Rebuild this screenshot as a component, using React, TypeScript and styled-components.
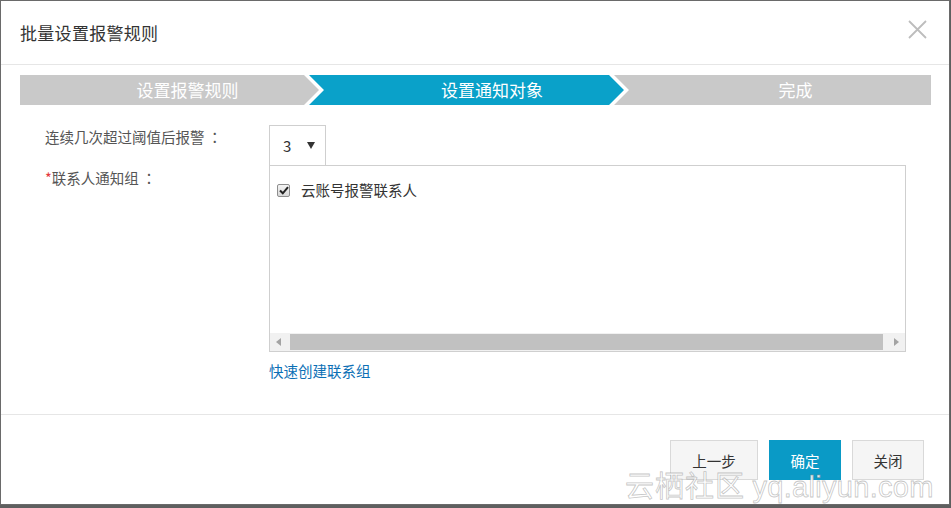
import React from "react";
import styled, { createGlobalStyle, css } from "styled-components";

const Global = createGlobalStyle`
  html, body { margin: 0; padding: 0; }
  body {
    background: #5f5f5f;
    font-family: "Noto Sans CJK SC", "Microsoft YaHei", "Liberation Sans", sans-serif;
    font-size: 14.5px;
    color: #333;
    width: 951px;
    height: 508px;
    overflow: hidden;
  }
  * { box-sizing: border-box; }
`;

const Dialog = styled.div`
  position: relative;
  width: 950px;
  height: 505px;
  background: #fff;
  border: 1px solid #6a6a6a;
  display: flex;
  flex-direction: column;
`;

const Header = styled.div`
  height: 64px;
  border-bottom: 1px solid #e6e6e6;
  display: flex;
  align-items: center;
  justify-content: space-between;
  padding: 0 22px 0 19px;
`;

const Title = styled.div`
  font-size: 17px;
  color: #333;
  letter-spacing: 0.3px;
`;

const CloseBtn = styled.button`
  width: 20px;
  height: 20px;
  padding: 0;
  border: none;
  background: transparent;
  display: flex;
  align-items: center;
  justify-content: center;
  margin-top: -6px;
  cursor: pointer;
`;

const Body = styled.div`
  height: 349px;
  padding: 10px 18px 0 19px;
  display: flex;
  flex-direction: column;
`;

const Steps = styled.div`
  display: flex;
  height: 30px;
`;

const Step = styled.div<{ $active?: boolean; $kind: "first" | "mid" | "last"; $w?: number; $pad: number }>`
  height: 30px;
  line-height: 30px;
  color: #fff;
  font-size: 17px;
  text-align: center;
  padding-left: ${(p) => p.$pad}px;
  background: ${(p) => (p.$active ? "#0aa1c9" : "#c9c9c9")};
  ${(p) => (p.$w ? css`width: ${p.$w}px; flex: none;` : css`flex: 1;`)}
  ${(p) => p.$kind !== "first" && css`margin-left: -10px;`}
  clip-path: ${(p) =>
    p.$kind === "first"
      ? "polygon(0 0, calc(100% - 15px) 0, 100% 50%, calc(100% - 15px) 100%, 0 100%)"
      : p.$kind === "mid"
      ? "polygon(0 0, calc(100% - 15px) 0, 100% 50%, calc(100% - 15px) 100%, 0 100%, 15px 50%)"
      : "polygon(0 0, 100% 0, 100% 100%, 0 100%, 15px 50%)"};
`;

const Form = styled.div`
  display: grid;
  grid-template-columns: 224px 637px;
  padding: 20px 0 0 25px;
`;

const Label = styled.div`
  line-height: 24px;
  color: #555;
`;

const Colon = styled.span`
  font-family: "Noto Sans CJK TC", "Noto Sans CJK SC", sans-serif;
  margin-left: 3px;
`;

const Star = styled.span`
  color: #e4393c;
`;

const Select = styled.div`
  width: 57px;
  height: 41px;
  border: 1px solid #cfcfcf;
  display: flex;
  align-items: center;
  padding: 0 0 0 13px;
  gap: 16px;
  color: #333;
  font-size: 15px;
`;

const ListBox = styled.div`
  margin-top: -1px;
  height: 187px;
  border: 1px solid #cfcfcf;
  display: flex;
  flex-direction: column;
`;

const ListContent = styled.div`
  flex: 1;
  padding: 14px 0 0 7px;
`;

const CheckRow = styled.label`
  display: flex;
  align-items: center;
  gap: 11px;
  color: #333;
  line-height: 20px;
`;

const CheckBox = styled.span`
  width: 13px;
  height: 13px;
  border: 1px solid #8e8e8e;
  border-radius: 2px;
  background: linear-gradient(#f4f4f4, #d8d8d8);
  display: flex;
  align-items: center;
  justify-content: center;
`;

const ScrollBar = styled.div`
  height: 18px;
  background: #f1f1f1;
  display: flex;
  align-items: center;
`;

const ScrollArrow = styled.div`
  width: 17px;
  height: 17px;
  display: flex;
  align-items: center;
  justify-content: center;
`;

const Thumb = styled.div`
  flex: 1;
  height: 16px;
  background: #c1c1c1;
  margin: 0 5px 0 3px;
`;

const Spacer = styled.div``;

const Link = styled.a`
  display: inline-block;
  margin-top: 7px;
  line-height: 24px;
  color: #0b6fb5;
  text-decoration: none;
`;

const Footer = styled.div`
  flex: 1;
  border-top: 1px solid #e6e6e6;
  display: flex;
  justify-content: flex-end;
  align-items: flex-start;
  gap: 11px;
  padding: 25px 25px 0 0;
`;

const Button = styled.button<{ $primary?: boolean; $w: number }>`
  width: ${(p) => p.$w}px;
  height: 40px;
  font-family: inherit;
  font-size: 14.5px;
  border: 1px solid ${(p) => (p.$primary ? "#0a9ac6" : "#d9d9d9")};
  background: ${(p) => (p.$primary ? "#0a9ac6" : "#f5f5f5")};
  color: ${(p) => (p.$primary ? "#fff" : "#333")};
  padding: 0;
  cursor: pointer;
`;

const Watermark = styled.div`
  position: absolute;
  left: 624px;
  top: 463px;
  font-size: 29px;
  line-height: 40px;
  color: rgba(255, 255, 255, 0.85);
  -webkit-text-stroke: 0.8px rgba(140, 140, 140, 0.5);
  white-space: nowrap;
  pointer-events: none;
  letter-spacing: 1px;
`;

const WmLatin = styled.span`
  font-family: "Liberation Sans", Arial, sans-serif;
  letter-spacing: 0.3px;
`;

export default function App() {
  return (
    <>
      <Global />
      <Dialog>
        <Header>
          <Title>批量设置报警规则</Title>
          <CloseBtn aria-label="关闭">
            <svg width="19" height="19" viewBox="0 0 19 19">
              <path d="M1 1 L18 18 M18 1 L1 18" stroke="#bdbdbd" strokeWidth="1.8" fill="none" />
            </svg>
          </CloseBtn>
        </Header>
        <Body>
          <Steps>
            <Step $kind="first" $w={299} $pad={36}>设置报警规则</Step>
            <Step $kind="mid" $active $w={315} $pad={51}>设置通知对象</Step>
            <Step $kind="last" $pad={46}>完成</Step>
          </Steps>
          <Form>
            <Label>
              连续几次超过阈值后报警<Colon>：</Colon>
            </Label>
            <Select>
              <span>3</span>
              <svg width="8" height="7" viewBox="0 0 8 7">
                <path d="M0 0 L8 0 L4 7 Z" fill="#333" />
              </svg>
            </Select>
            <Label>
              <Star>*</Star>联系人通知组<Colon>：</Colon>
            </Label>
            <div>
              <ListBox>
                <ListContent>
                  <CheckRow>
                    <CheckBox>
                      <svg width="10" height="9" viewBox="0 0 10 9">
                        <path d="M1 4.5 L3.8 7.3 L9 1.2" stroke="#222" strokeWidth="2" fill="none" />
                      </svg>
                    </CheckBox>
                    云账号报警联系人
                  </CheckRow>
                </ListContent>
                <ScrollBar>
                  <ScrollArrow>
                    <svg width="5" height="8" viewBox="0 0 5 8">
                      <path d="M5 0 L0 4 L5 8 Z" fill="#a3a3a3" />
                    </svg>
                  </ScrollArrow>
                  <Thumb />
                  <ScrollArrow>
                    <svg width="5" height="8" viewBox="0 0 5 8">
                      <path d="M0 0 L5 4 L0 8 Z" fill="#a3a3a3" />
                    </svg>
                  </ScrollArrow>
                </ScrollBar>
              </ListBox>
              <Link href="#">快速创建联系组</Link>
            </div>
            <Spacer />
          </Form>
        </Body>
        <Footer>
          <Button $w={88}>上一步</Button>
          <Button $primary $w={72}>确定</Button>
          <Button $w={72}>关闭</Button>
        </Footer>
        <Watermark>
          云栖社区 <WmLatin>yq.aliyun.com</WmLatin>
        </Watermark>
      </Dialog>
    </>
  );
}
